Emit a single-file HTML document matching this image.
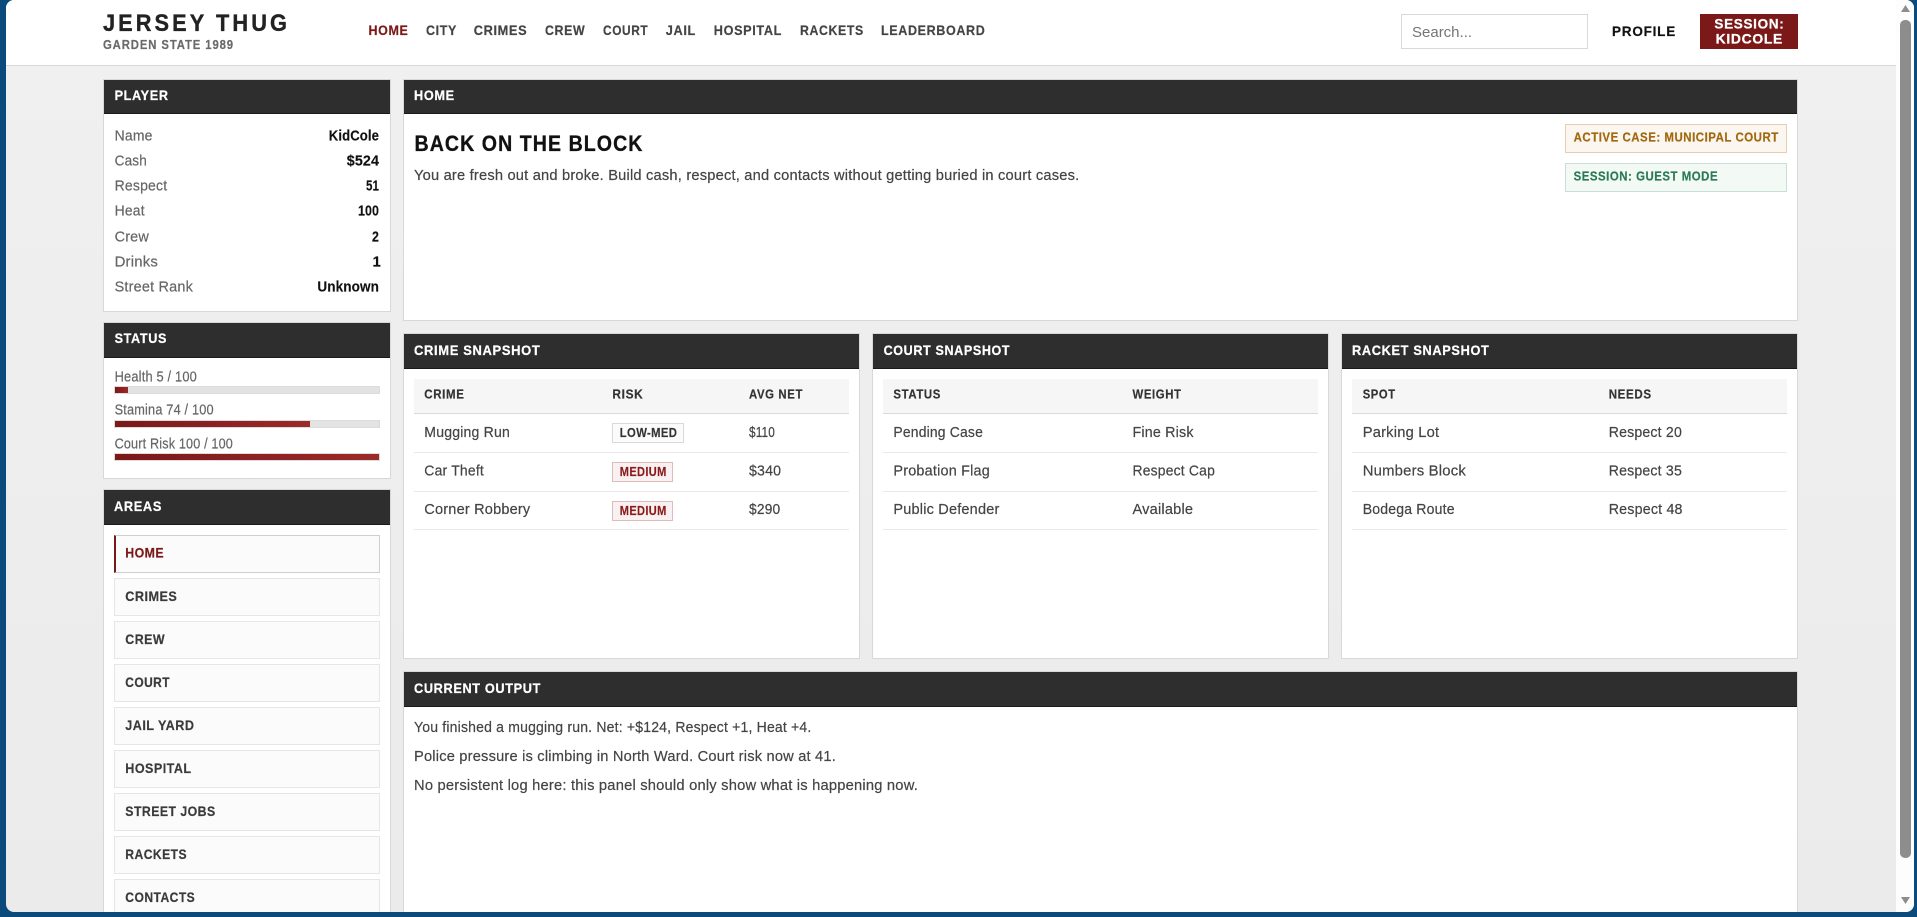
<!DOCTYPE html>
<html lang="en">
<head>
<meta charset="utf-8">
<title>Jersey Thug</title>
<style>
html,body{margin:0;padding:0;width:1917px;height:917px;overflow:hidden;background:#0b4a7a;font-family:"Liberation Sans",Arial,sans-serif}
#win{position:absolute;left:6px;top:0;width:1908px;height:912px;overflow:hidden;border-radius:8px;background:linear-gradient(#f0f0f0,#ebebeb)}
#in{position:absolute;left:-6px;top:0;width:1917px;height:917px}
#in div,#in input{position:absolute;box-sizing:border-box}
.topbar{left:0;top:0;width:1917px;height:66px;background:#fff;border-bottom:1px solid #d9d9d9}
.p{background:#fff;border:1px solid #d8d8d8}
.h{background:#2e2e2e;border-bottom:1px solid #1a1a1a}
.th{background:#f6f6f6;border-bottom:1px solid #d9d9d9;height:35px;top:379px}
.ln{height:1px;background:#e9e9e9}
.bar{left:114px;width:266px;background:#e3e3e3;border:1px solid #dcdcdc}
.fill{left:0;top:0;height:100%;background:linear-gradient(90deg,#7b1818,#9c2a2a)}
.area{left:114px;width:266px;height:38px;background:#fbfbfb;border:1px solid #e6e6e6}
.pill{height:20px}
#t{position:absolute;left:0;top:0}
#t text{font-family:"Liberation Sans",Arial,sans-serif;font-size:15px;fill:#444;stroke:#444;stroke-width:.2px;letter-spacing:.2px}
#t .b{font-weight:700;letter-spacing:.6px;stroke-width:.2px}
#t .w{font-weight:700;fill:#fff;stroke:#fff;font-size:14px;letter-spacing:.7px;stroke-width:.25px}
#t .l{fill:#666;stroke:#666}
#t .v{font-weight:700;fill:#111;stroke:#111;letter-spacing:.1px;stroke-width:.15px}
#t .n{font-weight:700;fill:#444;stroke:#444;font-size:14px;letter-spacing:.7px;stroke-width:.2px}
#t .a{font-weight:700;fill:#3a3a3a;stroke:#3a3a3a;font-size:14px;letter-spacing:.5px;stroke-width:.2px}
#t .c{font-weight:700;fill:#333;stroke:#333;font-size:13px;letter-spacing:.7px;stroke-width:.2px}
#t .r{font-weight:700;font-size:12.5px;letter-spacing:.4px;stroke-width:.15px}
input::placeholder{color:#757575;opacity:1}
</style>
</head>
<body>
<div id="win"><div id="in">
  <div class="topbar"></div>
  <input type="text" placeholder="Search..." style="left:1401px;top:14px;width:187px;height:35px;border:1px solid #d9d9d9;padding:2px 0 0 10px;font:15px 'Liberation Sans',Arial,sans-serif;background:#fff;outline:none">
  <div style="left:1700px;top:14px;width:98px;height:35px;background:#7b1818"></div>

  <div class="p" style="left:103px;top:79px;width:288px;height:233px"><div class="h" style="left:0;top:0;width:286px;height:34px"></div></div>
  <div class="p" style="left:103px;top:322px;width:288px;height:157px"><div class="h" style="left:0;top:0;width:286px;height:35px"></div></div>
  <div class="p" style="left:103px;top:489px;width:288px;height:440px"><div class="h" style="left:0;top:0;width:286px;height:35px"></div></div>

  <div class="bar" style="top:386px;height:8px"><div class="fill" style="width:13px"></div></div>
  <div class="bar" style="top:420px;height:8px"><div class="fill" style="width:195px"></div></div>
  <div class="bar" style="top:453px;height:8px"><div class="fill" style="width:264px"></div></div>

  <div class="area" style="top:535px;border-color:#cfcfcf;border-left:2px solid #7b1818"></div>
  <div class="area" style="top:578px"></div>
  <div class="area" style="top:621px"></div>
  <div class="area" style="top:664px"></div>
  <div class="area" style="top:707px"></div>
  <div class="area" style="top:750px"></div>
  <div class="area" style="top:793px"></div>
  <div class="area" style="top:836px"></div>
  <div class="area" style="top:879px"></div>

  <div class="p" style="left:403px;top:79px;width:1395px;height:242px"><div class="h" style="left:0;top:0;width:1393px;height:34px"></div></div>
  <div style="left:1565px;top:124px;width:222px;height:29px;background:#fbf7f0;border:1px solid #e4d0b0"></div>
  <div style="left:1565px;top:163px;width:222px;height:29px;background:#f3f9f5;border:1px solid #c9dfd6"></div>

  <div class="p" style="left:403px;top:333px;width:457px;height:326px"><div class="h" style="left:0;top:0;width:455px;height:35px"></div></div>
  <div class="p" style="left:872px;top:333px;width:457px;height:326px"><div class="h" style="left:0;top:0;width:455px;height:35px"></div></div>
  <div class="p" style="left:1341px;top:333px;width:457px;height:326px"><div class="h" style="left:0;top:0;width:455px;height:35px"></div></div>

  <div class="th" style="left:414px;width:435px"></div>
  <div class="ln" style="left:414px;width:435px;top:452px"></div>
  <div class="ln" style="left:414px;width:435px;top:491px"></div>
  <div class="ln" style="left:414px;width:435px;top:529px"></div>
  <div class="th" style="left:883px;width:435px"></div>
  <div class="ln" style="left:883px;width:435px;top:452px"></div>
  <div class="ln" style="left:883px;width:435px;top:491px"></div>
  <div class="ln" style="left:883px;width:435px;top:529px"></div>
  <div class="th" style="left:1352px;width:435px"></div>
  <div class="ln" style="left:1352px;width:435px;top:452px"></div>
  <div class="ln" style="left:1352px;width:435px;top:491px"></div>
  <div class="ln" style="left:1352px;width:435px;top:529px"></div>

  <div class="pill" style="left:612px;top:423px;width:72px;background:#fbfbfb;border:1px solid #d9d9d9"></div>
  <div class="pill" style="left:612px;top:462px;width:61px;background:#f9f1f1;border:1px solid #dfbcbc"></div>
  <div class="pill" style="left:612px;top:501px;width:61px;background:#f9f1f1;border:1px solid #dfbcbc"></div>

  <div class="p" style="left:403px;top:671px;width:1395px;height:260px"><div class="h" style="left:0;top:0;width:1393px;height:35px"></div></div>

  <div style="left:1896px;top:0;width:18px;height:912px;background:#fdfdfd"></div>
  <div style="left:1900px;top:20px;width:11px;height:838px;background:#8d8d8d;border-radius:5px"></div>

  <svg id="t" width="1917" height="917" viewBox="0 0 1917 917" xmlns="http://www.w3.org/2000/svg">
    <polygon points="1905.5,5 1910,12 1901,12" fill="#8d8d8d"/>
    <polygon points="1901,897 1910,897 1905.5,904" fill="#8d8d8d"/>

    <text x="103" y="31" class="b" style="font-size:24px;fill:#222;stroke:#222;stroke-width:.35px;letter-spacing:3.4px" textLength="187" lengthAdjust="spacingAndGlyphs">JERSEY THUG</text>
    <text x="103" y="49" class="b" style="font-size:12.5px;fill:#6a6a6a;stroke:#6a6a6a;letter-spacing:1px" textLength="131" lengthAdjust="spacingAndGlyphs">GARDEN STATE 1989</text>

    <text x="368.5" y="35" class="n" style="fill:#7b1818;stroke:#7b1818" textLength="40" lengthAdjust="spacingAndGlyphs">HOME</text>
    <text x="426" y="35" class="n" textLength="31" lengthAdjust="spacingAndGlyphs">CITY</text>
    <text x="473.7" y="35" class="n" textLength="53.6" lengthAdjust="spacingAndGlyphs">CRIMES</text>
    <text x="545" y="35" class="n" textLength="40.3" lengthAdjust="spacingAndGlyphs">CREW</text>
    <text x="603" y="35" class="n" textLength="45.3" lengthAdjust="spacingAndGlyphs">COURT</text>
    <text x="665.7" y="35" class="n" textLength="30.3" lengthAdjust="spacingAndGlyphs">JAIL</text>
    <text x="713.8" y="35" class="n" textLength="68.2" lengthAdjust="spacingAndGlyphs">HOSPITAL</text>
    <text x="800" y="35" class="n" textLength="63.8" lengthAdjust="spacingAndGlyphs">RACKETS</text>
    <text x="881" y="35" class="n" textLength="104.4" lengthAdjust="spacingAndGlyphs">LEADERBOARD</text>

    <text x="1612" y="36" class="b" style="font-size:14px;fill:#111;stroke:#111;letter-spacing:.8px" textLength="64" lengthAdjust="spacingAndGlyphs">PROFILE</text>
    <text x="1714.4" y="28.5" class="w" textLength="70" lengthAdjust="spacingAndGlyphs">SESSION:</text>
    <text x="1715.6" y="43.5" class="w" textLength="67.4" lengthAdjust="spacingAndGlyphs">KIDCOLE</text>

    <text x="114.6" y="100" class="w" textLength="54" lengthAdjust="spacingAndGlyphs">PLAYER</text>
    <text x="114.6" y="140.7" class="l" textLength="38" lengthAdjust="spacingAndGlyphs">Name</text>
    <text x="114.6" y="165.7" class="l" textLength="32.4" lengthAdjust="spacingAndGlyphs">Cash</text>
    <text x="114.6" y="190.7" class="l" textLength="52.7" lengthAdjust="spacingAndGlyphs">Respect</text>
    <text x="114.6" y="215.7" class="l" textLength="30.2" lengthAdjust="spacingAndGlyphs">Heat</text>
    <text x="114.6" y="241.7" class="l" textLength="34.4" lengthAdjust="spacingAndGlyphs">Crew</text>
    <text x="114.6" y="266.7" class="l" textLength="43.4" lengthAdjust="spacingAndGlyphs">Drinks</text>
    <text x="114.6" y="291.7" class="l" textLength="78.4" lengthAdjust="spacingAndGlyphs">Street Rank</text>
    <text x="328.8" y="140.7" class="v" textLength="50.2" lengthAdjust="spacingAndGlyphs">KidCole</text>
    <text x="346.8" y="165.7" class="v" textLength="32.2" lengthAdjust="spacingAndGlyphs">$524</text>
    <text x="366" y="190.7" class="v" textLength="13" lengthAdjust="spacingAndGlyphs">51</text>
    <text x="358" y="215.7" class="v" textLength="21" lengthAdjust="spacingAndGlyphs">100</text>
    <text x="372" y="241.7" class="v" textLength="7" lengthAdjust="spacingAndGlyphs">2</text>
    <text x="372.5" y="266.7" class="v">1</text>
    <text x="317.4" y="291.7" class="v" textLength="61.6" lengthAdjust="spacingAndGlyphs">Unknown</text>

    <text x="114.6" y="343" class="w" textLength="52.4" lengthAdjust="spacingAndGlyphs">STATUS</text>
    <text x="114.6" y="381.3" class="l" style="font-size:14.5px" textLength="82.4" lengthAdjust="spacingAndGlyphs">Health 5 / 100</text>
    <text x="114.6" y="414.3" class="l" style="font-size:14.5px" textLength="99.2" lengthAdjust="spacingAndGlyphs">Stamina 74 / 100</text>
    <text x="114.6" y="448.3" class="l" style="font-size:14.5px" textLength="118.4" lengthAdjust="spacingAndGlyphs">Court Risk 100 / 100</text>

    <text x="114" y="511" class="w" textLength="48" lengthAdjust="spacingAndGlyphs">AREAS</text>
    <text x="125.3" y="557.7" class="a" style="fill:#7b1818;stroke:#7b1818" textLength="38.7" lengthAdjust="spacingAndGlyphs">HOME</text>
    <text x="125.3" y="601" class="a" textLength="52" lengthAdjust="spacingAndGlyphs">CRIMES</text>
    <text x="125.3" y="644" class="a" textLength="39.7" lengthAdjust="spacingAndGlyphs">CREW</text>
    <text x="125.3" y="687" class="a" textLength="44.7" lengthAdjust="spacingAndGlyphs">COURT</text>
    <text x="125.3" y="730" class="a" textLength="69.1" lengthAdjust="spacingAndGlyphs">JAIL YARD</text>
    <text x="125.3" y="773" class="a" textLength="66.2" lengthAdjust="spacingAndGlyphs">HOSPITAL</text>
    <text x="125.3" y="816" class="a" textLength="90.3" lengthAdjust="spacingAndGlyphs">STREET JOBS</text>
    <text x="125.3" y="859" class="a" textLength="61.7" lengthAdjust="spacingAndGlyphs">RACKETS</text>
    <text x="125.3" y="902" class="a" textLength="69.9" lengthAdjust="spacingAndGlyphs">CONTACTS</text>

    <text x="414" y="100" class="w" textLength="40.7" lengthAdjust="spacingAndGlyphs">HOME</text>
    <text x="414.5" y="151" class="b" style="font-size:22px;fill:#111;stroke:#111;stroke-width:.3px;letter-spacing:1.2px" textLength="229" lengthAdjust="spacingAndGlyphs">BACK ON THE BLOCK</text>
    <text x="414" y="180" style="font-size:14.5px" textLength="665.4" lengthAdjust="spacingAndGlyphs">You are fresh out and broke. Build cash, respect, and contacts without getting buried in court cases.</text>
    <text x="1573.6" y="141.3" class="b" style="font-size:13px;fill:#a2680f;stroke:#a2680f" textLength="205.2" lengthAdjust="spacingAndGlyphs">ACTIVE CASE: MUNICIPAL COURT</text>
    <text x="1573.6" y="180.3" class="b" style="font-size:13px;fill:#2a7a56;stroke:#2a7a56" textLength="144.5" lengthAdjust="spacingAndGlyphs">SESSION: GUEST MODE</text>

    <text x="414" y="355" class="w" textLength="126.4" lengthAdjust="spacingAndGlyphs">CRIME SNAPSHOT</text>
    <text x="883.6" y="355" class="w" textLength="126.6" lengthAdjust="spacingAndGlyphs">COURT SNAPSHOT</text>
    <text x="1352" y="355" class="w" textLength="137.5" lengthAdjust="spacingAndGlyphs">RACKET SNAPSHOT</text>

    <text x="424.3" y="398.3" class="c" textLength="40.2" lengthAdjust="spacingAndGlyphs">CRIME</text>
    <text x="612.4" y="398.3" class="c" textLength="31" lengthAdjust="spacingAndGlyphs">RISK</text>
    <text x="749" y="398.3" class="c" textLength="54" lengthAdjust="spacingAndGlyphs">AVG NET</text>
    <text x="424.3" y="437" textLength="85.7" lengthAdjust="spacingAndGlyphs">Mugging Run</text>
    <text x="424.3" y="475.7" textLength="59.7" lengthAdjust="spacingAndGlyphs">Car Theft</text>
    <text x="424.3" y="514" textLength="106.1" lengthAdjust="spacingAndGlyphs">Corner Robbery</text>
    <text x="619.8" y="437" class="r" style="fill:#333;stroke:#333" textLength="57.5" lengthAdjust="spacingAndGlyphs">LOW-MED</text>
    <text x="619.8" y="476" class="r" style="fill:#8a1a1a;stroke:#8a1a1a" textLength="46.8" lengthAdjust="spacingAndGlyphs">MEDIUM</text>
    <text x="619.8" y="515" class="r" style="fill:#8a1a1a;stroke:#8a1a1a" textLength="46.8" lengthAdjust="spacingAndGlyphs">MEDIUM</text>
    <text x="749" y="437" textLength="26" lengthAdjust="spacingAndGlyphs">$110</text>
    <text x="749" y="475.7" textLength="32.2" lengthAdjust="spacingAndGlyphs">$340</text>
    <text x="749" y="514" textLength="31.4" lengthAdjust="spacingAndGlyphs">$290</text>

    <text x="893.4" y="398.3" class="c" textLength="47.6" lengthAdjust="spacingAndGlyphs">STATUS</text>
    <text x="1132.5" y="398.3" class="c" textLength="49.1" lengthAdjust="spacingAndGlyphs">WEIGHT</text>
    <text x="893.4" y="437" textLength="89.6" lengthAdjust="spacingAndGlyphs">Pending Case</text>
    <text x="893.4" y="475.7" textLength="96.6" lengthAdjust="spacingAndGlyphs">Probation Flag</text>
    <text x="893.4" y="514" textLength="106.1" lengthAdjust="spacingAndGlyphs">Public Defender</text>
    <text x="1132.5" y="437" textLength="61.2" lengthAdjust="spacingAndGlyphs">Fine Risk</text>
    <text x="1132.5" y="475.7" textLength="82.5" lengthAdjust="spacingAndGlyphs">Respect Cap</text>
    <text x="1132.5" y="514" textLength="60.7" lengthAdjust="spacingAndGlyphs">Available</text>

    <text x="1362.7" y="398.3" class="c" textLength="33" lengthAdjust="spacingAndGlyphs">SPOT</text>
    <text x="1608.7" y="398.3" class="c" textLength="43" lengthAdjust="spacingAndGlyphs">NEEDS</text>
    <text x="1362.7" y="437" textLength="76.6" lengthAdjust="spacingAndGlyphs">Parking Lot</text>
    <text x="1362.7" y="475.7" textLength="103.3" lengthAdjust="spacingAndGlyphs">Numbers Block</text>
    <text x="1362.7" y="514" textLength="92" lengthAdjust="spacingAndGlyphs">Bodega Route</text>
    <text x="1608.7" y="437" textLength="73.3" lengthAdjust="spacingAndGlyphs">Respect 20</text>
    <text x="1608.7" y="475.7" textLength="73.3" lengthAdjust="spacingAndGlyphs">Respect 35</text>
    <text x="1608.7" y="514" textLength="74" lengthAdjust="spacingAndGlyphs">Respect 48</text>

    <text x="414" y="693" class="w" textLength="127" lengthAdjust="spacingAndGlyphs">CURRENT OUTPUT</text>
    <text x="414" y="732" textLength="397.5" lengthAdjust="spacingAndGlyphs">You finished a mugging run. Net: +$124, Respect +1, Heat +4.</text>
    <text x="414" y="761" textLength="422" lengthAdjust="spacingAndGlyphs">Police pressure is climbing in North Ward. Court risk now at 41.</text>
    <text x="414" y="790" textLength="504" lengthAdjust="spacingAndGlyphs">No persistent log here: this panel should only show what is happening now.</text>
  </svg>
</div></div>
</body>
</html>
